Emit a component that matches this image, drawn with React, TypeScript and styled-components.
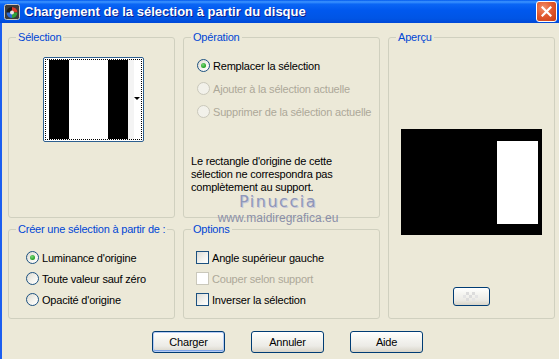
import styled, { createGlobalStyle, css } from 'styled-components'

const GlobalStyle = createGlobalStyle`
  html, body {
    margin: 0;
    padding: 0;
    background: #ECE9D8;
  }
  body {
    font-family: "Liberation Sans", Arial, sans-serif;
    font-size: 11px;
    letter-spacing: -0.2px;
    color: #000;
  }
`

// little PSP-ish app icon in the caption
const AppIcon = () => (
  <svg width='16' height='16' viewBox='0 0 16 16'>
    <rect x='0.5' y='0.5' width='15' height='15' rx='2' fill='#3a3a3a' stroke='#c8c8c8' />
    <circle cx='8' cy='8.5' r='5.5' fill='#1b1b1b' />
    <path d='M8 3 A5.5 5.5 0 0 1 13.5 8.5 L8 8.5 Z' fill='#d83a2a' />
    <path d='M13.5 8.5 A5.5 5.5 0 0 1 8 14 L8 8.5 Z' fill='#2f9e3a' />
    <path d='M8 14 A5.5 5.5 0 0 1 2.5 8.5 L8 8.5 Z' fill='#2a6ad8' />
    <circle cx='8' cy='8.5' r='2' fill='#e8e8e8' />
  </svg>
)

const CloseGlyph = () => (
  <svg width='11' height='11' viewBox='0 0 11 11'>
    <path d='M1.5 1.5 L9.5 9.5 M9.5 1.5 L1.5 9.5' stroke='#fff' strokeWidth='2.2' strokeLinecap='square' />
  </svg>
)

const Checker = () => (
  <svg width='18' height='9' viewBox='0 0 18 9'>
    <rect x='3' y='0' width='3' height='3' fill='#dcdcdc' />
    <rect x='9' y='0' width='3' height='3' fill='#dcdcdc' />
    <rect x='0' y='3' width='3' height='3' fill='#e4e4e4' />
    <rect x='6' y='3' width='3' height='3' fill='#dcdcdc' />
    <rect x='12' y='3' width='3' height='3' fill='#e4e4e4' />
    <rect x='3' y='6' width='3' height='3' fill='#dcdcdc' />
    <rect x='9' y='6' width='3' height='3' fill='#e4e4e4' />
  </svg>
)

const Radio = ({ checked, disabled, label }: { checked?: boolean; disabled?: boolean; label: string }) => (
  <OptionRow disabled={disabled}>
    <RadioCircle disabled={disabled}>{checked && <RadioDot />}</RadioCircle>
    <span>{label}</span>
  </OptionRow>
)

const Check = ({ disabled, label }: { disabled?: boolean; label: string }) => (
  <OptionRow disabled={disabled}>
    <CheckBox disabled={disabled} />
    <span>{label}</span>
  </OptionRow>
)

const App = () => {
  return (
    <>
      <GlobalStyle />
      <Window>
        <TitleBar>
          <AppIcon />
          <Title>Chargement de la sélection à partir du disque</Title>
          <CloseButton>
            <CloseGlyph />
          </CloseButton>
        </TitleBar>

        <Body>
          <Groups>
            <Group>
              <Legend>Sélection</Legend>
              <SelectionContent>
                <Thumb>
                  <ThumbFocus>
                    <Stripe tone='black' w={20} />
                    <Stripe tone='white' w={39} />
                    <Stripe tone='black' w={20} />
                    <Stripe tone='pale' w={6} />
                    <DropArrow />
                  </ThumbFocus>
                </Thumb>
              </SelectionContent>
            </Group>

            <Group>
              <Legend>Opération</Legend>
              <OperationContent>
                <Options>
                  <Radio checked label='Remplacer la sélection' />
                  <Radio disabled label='Ajouter à la sélection actuelle' />
                  <Radio disabled label='Supprimer de la sélection actuelle' />
                </Options>
                <Note>
                  Le rectangle d'origine de cette<br />
                  sélection ne correspondra pas<br />
                  complètement au support.
                </Note>
              </OperationContent>
            </Group>

            <PreviewGroup>
              <Legend>Aperçu</Legend>
              <PreviewContent>
                <Preview>
                  <PreviewWhite />
                </Preview>
                <SmallButton>
                  <Checker />
                </SmallButton>
              </PreviewContent>
            </PreviewGroup>

            <Group>
              <Legend>Créer une sélection à partir de :</Legend>
              <ListContent inset={17}>
                <Radio checked label="Luminance d'origine" />
                <Radio label='Toute valeur sauf zéro' />
                <Radio label="Opacité d'origine" />
              </ListContent>
            </Group>

            <Group>
              <Legend>Options</Legend>
              <ListContent inset={12}>
                <Check label='Angle supérieur gauche' />
                <Check disabled label='Couper selon support' />
                <Check label='Inverser la sélection' />
              </ListContent>
            </Group>
          </Groups>

          <ButtonRow>
            <Button primary>Charger</Button>
            <Button>Annuler</Button>
            <Button>Aide</Button>
          </ButtonRow>
        </Body>

        {/* watermark sits over the dialog */}
        <Watermark>
          <WatermarkName>Pinuccia</WatermarkName>
          <WatermarkUrl>www.maidiregrafica.eu</WatermarkUrl>
        </Watermark>
      </Window>
    </>
  )
}

const Window = styled.div`
  position: relative;
  width: 559px;
  height: 359px;
  display: flex;
  flex-direction: column;
  overflow: hidden;
  background: #ECE9D8;
`

const TitleBar = styled.div`
  height: 23px;
  flex-shrink: 0;
  display: flex;
  align-items: center;
  gap: 4px;
  padding: 0 2px 0 4px;
  box-sizing: border-box;
  background: linear-gradient(
    to bottom,
    #0058ee 0%,
    #3d95ff 8%,
    #0a66f5 18%,
    #0058ee 45%,
    #0055e5 80%,
    #0048d8 100%
  );
`

const Title = styled.span`
  flex: 1;
  color: #fff;
  font-family: "Liberation Sans", Arial, sans-serif;
  font-weight: bold;
  font-size: 13px;
  letter-spacing: 0;
  text-shadow: 1px 1px 0 #0a1e8c;
  white-space: nowrap;
`

const CloseButton = styled.div`
  width: 19px;
  height: 19px;
  border: 1px solid #fff;
  border-radius: 3px;
  display: flex;
  align-items: center;
  justify-content: center;
  background: radial-gradient(circle at 35% 30%, #f0906a 0%, #e25a30 45%, #c83c14 100%);
`

const Body = styled.div`
  flex: 1;
  border-left: 2px solid #1c5ef0;
  padding: 8px 0 0 6px;
`

const Groups = styled.div`
  display: grid;
  grid-template-columns: 167px 197px 167px;
  grid-template-rows: 187px 96px;
  column-gap: 8px;
  row-gap: 5px;
`

const Group = styled.fieldset`
  margin: 0;
  padding: 0;
  min-width: 0;
  border: 1px solid #d0d0bf;
  border-radius: 3px;
  box-sizing: border-box;
`

const PreviewGroup = styled(Group)`
  grid-row: 1 / span 2;
  grid-column: 3;
`

const Legend = styled.legend`
  color: #0046d5;
  font-size: 11px;
  line-height: 13px;
  padding: 0 2px;
  margin-left: 7px;
  white-space: nowrap;
`

const SelectionContent = styled.div`
  padding: 13px 0 0 34px;
`

const OperationContent = styled.div`
  padding: 10px 0 0 7px;
`

const PreviewContent = styled.div`
  display: flex;
  flex-direction: column;
  align-items: center;
  padding-top: 85px;
`

const ListContent = styled.div<{ inset: number }>`
  display: flex;
  flex-direction: column;
  padding: 11px 0 0 ${p => p.inset}px;
`

const Thumb = styled.div`
  width: 101px;
  height: 85px;
  box-sizing: border-box;
  border: 1px solid #2d5f8f;
  border-radius: 2px;
  background: #fff;
  padding: 1px;
`

const ThumbFocus = styled.div`
  position: relative;
  height: 100%;
  box-sizing: border-box;
  border: 1px dotted #000;
  padding: 0 3px;
  display: flex;
`

const Stripe = styled.div<{ tone: 'black' | 'white' | 'pale'; w: number }>`
  width: ${p => p.w}px;
  flex-shrink: 0;
  background: ${p => (p.tone === 'black' ? '#000' : p.tone === 'pale' ? '#f4f4f4' : '#fff')};
`

// the little combo arrow at the thumbnail's right edge
const DropArrow = styled.div`
  position: absolute;
  right: 1px;
  top: 37px;
  width: 0;
  height: 0;
  border-left: 3px solid transparent;
  border-right: 3px solid transparent;
  border-top: 3px solid #000;
`

const Options = styled.div`
  display: flex;
  flex-direction: column;
`

const OptionRow = styled.div<{ disabled?: boolean }>`
  display: flex;
  align-items: center;
  gap: 3px;
  height: 21px;
  white-space: nowrap;
  color: ${p => (p.disabled ? '#aca899' : '#000')};

  ${Options} & {
    height: 23px;
    margin-left: 6px;
  }
`

const RadioCircle = styled.div<{ disabled?: boolean }>`
  width: 13px;
  height: 13px;
  box-sizing: border-box;
  border-radius: 50%;
  flex-shrink: 0;
  display: flex;
  align-items: center;
  justify-content: center;
  ${p =>
    p.disabled
      ? css`
          border: 1px solid #cac8bb;
          background: #f2f1ea;
        `
      : css`
          border: 1px solid #1c5180;
          background: linear-gradient(135deg, #dcdad0 0%, #f6f5f0 60%, #fff 100%);
        `}
`

const RadioDot = styled.div`
  width: 5px;
  height: 5px;
  border-radius: 50%;
  background: radial-gradient(circle at 40% 35%, #7bd77b 0%, #21a121 70%);
`

const CheckBox = styled.div<{ disabled?: boolean }>`
  width: 13px;
  height: 13px;
  box-sizing: border-box;
  flex-shrink: 0;
  ${p =>
    p.disabled
      ? css`
          border: 1px solid #cac8bb;
          background: #fff;
        `
      : css`
          border: 1px solid #1c5180;
          background: linear-gradient(135deg, #dcdcd7 0%, #f4f4f0 60%, #fff 100%);
        `}
`

const Note = styled.p`
  margin: 32px 0 0;
  line-height: 13px;
`

const Preview = styled.div`
  width: 141px;
  height: 106px;
  box-sizing: border-box;
  background: #000;
  padding: 12px 4px 11px;
  display: flex;
  justify-content: flex-end;
`

const PreviewWhite = styled.div`
  width: 41px;
  background: #fff;
`

const buttonFace = css`
  box-sizing: border-box;
  border: 1px solid #003c74;
  border-radius: 3px;
  background: linear-gradient(to bottom, #ffffff 0%, #f6f6f2 30%, #ecebe6 70%, #d8d4c8 100%);
  font-family: "Liberation Sans", Arial, sans-serif;
  font-size: 11px;
  letter-spacing: -0.2px;
  color: #000;
  padding: 0;
  display: flex;
  align-items: center;
  justify-content: center;
`

const SmallButton = styled.div`
  ${buttonFace}
  width: 37px;
  height: 19px;
  margin-top: 52px;
`

const ButtonRow = styled.div`
  display: flex;
  gap: 26px;
  padding: 12px 0 0 144px;
`

const Button = styled.button<{ primary?: boolean }>`
  ${buttonFace}
  width: 73px;
  height: 22px;
  ${p =>
    p.primary &&
    css`
      box-shadow: inset 0 0 0 1px #b6ccf4, inset 0 -1px 0 1px #7ea4e6;
    `}
`

const Watermark = styled.div`
  position: absolute;
  left: 218px;
  top: 192px;
  width: 120px;
  display: flex;
  flex-direction: column;
  align-items: center;
  pointer-events: none;
`

const WatermarkName = styled.span`
  font-family: "DejaVu Sans", sans-serif;
  font-size: 16px;
  line-height: 19px;
  letter-spacing: 1.5px;
  color: #8f97b8;
  text-shadow: 1px 1px 0 #c8c8d8;
`

const WatermarkUrl = styled.span`
  font-family: "Liberation Sans", Arial, sans-serif;
  font-size: 12px;
  line-height: 12px;
  margin-top: 1px;
  letter-spacing: 0;
  color: #8a8fa8;
`

export default App
